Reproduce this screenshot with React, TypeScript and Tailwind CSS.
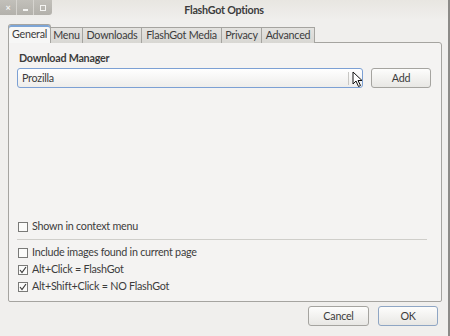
import React from "react";

const font = { fontFamily: 'Lato, "Noto Sans", sans-serif' };
const txt = "text-[10.75px] tracking-[-0.25px]";

function Check({ checked, label }: { checked?: boolean; label: string }) {
  return (
    <div className="flex items-center h-[17px]">
      <div className="w-[10px] h-[10px] border border-[#7a7a78] bg-[#fbfbfa] flex items-center justify-center ml-[1px]">
        {checked && (
          <svg width="8" height="8" viewBox="0 0 8 8">
            <path d="M1 4 L3 6.5 L7 1" stroke="#3c3c3c" strokeWidth="1.2" fill="none" />
          </svg>
        )}
      </div>
      <span className={`ml-[4px] ${txt} text-[#3c3c3c] leading-none whitespace-nowrap`}>{label}</span>
    </div>
  );
}

function Btn({ label, def, w }: { label: string; def?: boolean; w: string }) {
  return (
    <div
      className={`${w} h-[20px] rounded-[3px] border ${
        def ? "border-[#8fa6c4]" : "border-[#a5a4a0]"
      } bg-gradient-to-b from-[#fdfdfc] to-[#e8e7e4] flex items-center justify-center ${txt} text-[#3c3c3c]`}
    >
      {label}
    </div>
  );
}

export default function App() {
  const tabs = ["Menu", "Downloads", "FlashGot Media", "Privacy", "Advanced"];
  const tabW = ["w-[32px]", "w-[59px]", "w-[80px]", "w-[40px]", "w-[53px]"];
  return (
    <div
      className="w-[450px] h-[336px] bg-[#f0efed] relative overflow-hidden flex flex-col border-r-[2px] border-[#8c8b88]"
      style={font}
    >
      {/* title bar */}
      <div className="h-[20px] relative flex items-start bg-gradient-to-b from-[#e8e6e1] to-[#f0efed]">
        <div className="flex h-[15px] bg-gradient-to-b from-[#c2c0ba] to-[#b3b1ab] rounded-br-[3px] w-[52px]">
          <div className="w-[17px] flex items-center justify-center text-[#f4f4f2] text-[9px] font-bold border-r border-[#d6d4cf]">
            ×
          </div>
          <div className="w-[17px] flex items-end justify-center pb-[4px] border-r border-[#d6d4cf]">
            <div className="w-[5px] h-[2px] bg-[#f4f4f2]" />
          </div>
          <div className="w-[18px] flex items-center justify-center">
            <div className="w-[6px] h-[6px] border-[1.5px] border-[#f4f4f2]" />
          </div>
        </div>
        <div className={`absolute left-0 right-0 top-[5px] text-center ${txt} font-bold text-[#3c3c3c] leading-none`}>
          FlashGot Options
        </div>
      </div>

      {/* tabs */}
      <div className="flex items-end ml-[8px] mt-[5px] h-[18px] relative z-10">
        <div className={`w-[43px] h-[19px] border border-b-0 border-[#a5a4a0] rounded-t-[3px] bg-[#f7f7f6] flex items-center justify-center ${txt} text-[#3c3c3c] shadow-[inset_0_2px_0_#7da5d6] whitespace-nowrap`}>
          General
        </div>
        {tabs.map((t, i) => (
          <div
            key={t}
            className={`${tabW[i]} h-[16px] border border-l-0 border-b-0 border-[#a5a4a0] bg-gradient-to-b from-[#e4e3e0] to-[#d8d7d3] flex items-center justify-center ${txt} text-[#3c3c3c] whitespace-nowrap`}
          >
            {t}
          </div>
        ))}
      </div>

      {/* panel */}
      <div className="mx-[8px] w-[434px] h-[260px] border border-[#a5a4a0] rounded-tr-[3px] rounded-b-[2px] bg-[#f4f3f2] -mt-[1px] px-[8px] flex flex-col">
        <div className={`${txt} font-bold text-[#3c3c3c] mt-[10px] ml-[2px] leading-none whitespace-nowrap`}>
          Download Manager
        </div>
        <div className="flex items-center mt-[4px]">
          <div className="w-[346px] h-[20px] rounded-[3px] border border-[#7ca0d4] bg-gradient-to-b from-[#ffffff] to-[#eeedeb] flex items-center relative">
            <span className={`ml-[4px] ${txt} text-[#3c3c3c]`}>Prozilla</span>
            <div className="absolute right-[13px] top-[3px] w-[1px] h-[13px] bg-[#c8c7c4]" />
            <svg className="absolute right-[-2px] top-[2px]" width="12" height="18" viewBox="0 0 12 18">
              <path d="M1 1 L1 13 L4 10 L6.5 15.5 L8.5 14.5 L6 9.5 L10 9.5 Z" fill="#ffffff" stroke="#111" strokeWidth="1" strokeLinejoin="round" />
            </svg>
          </div>
          <div className="ml-[8px]">
            <Btn label="Add" w="w-[60px]" />
          </div>
        </div>
        <div className="flex-1" />
        <Check label="Shown in context menu" />
        <div className="h-[1px] bg-[#cfceca] mt-[4px] mb-[4px] mr-[6px]" />
        <Check label="Include images found in current page" />
        <Check checked label="Alt+Click = FlashGot" />
        <Check checked label="Alt+Shift+Click = NO FlashGot" />
        <div className="h-[6px]" />
      </div>

      {/* bottom buttons */}
      <div className="flex justify-end gap-[9px] mr-[10px] mt-[4px]">
        <Btn label="Cancel" w="w-[61px]" />
        <Btn label="OK" def w="w-[60px]" />
      </div>
    </div>
  );
}
